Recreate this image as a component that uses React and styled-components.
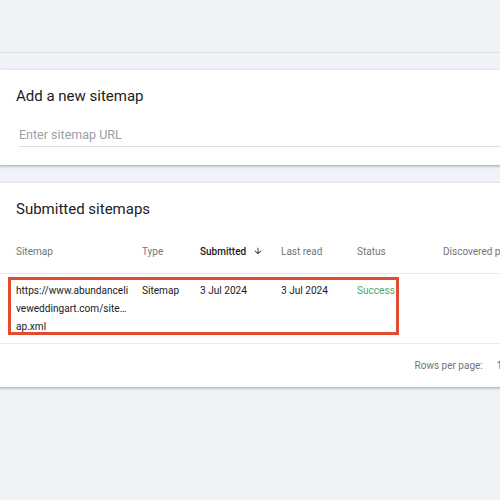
import React from "react";
import styled, { createGlobalStyle } from "styled-components";

const GlobalStyle = createGlobalStyle`
  html, body {
    margin: 0;
    padding: 0;
    background: #eff2f7;
    font-family: Roboto, "Liberation Sans", Arial, sans-serif;
    overflow: hidden;
  }
  * { box-sizing: border-box; }
`;

const Page = styled.div`
  width: 500px;
  height: 500px;
  background: #eff2f7;
  overflow: hidden;
`;

const TopBar = styled.div`
  height: 53px;
  border-bottom: 1px solid #dde1e7;
`;

const Stack = styled.div`
  display: flex;
  flex-direction: column;
  gap: 18px;
  padding-top: 17px;
`;

const Card = styled.section`
  width: 520px;
  background: #fff;
  box-shadow: 0 1px 2px rgba(60, 64, 67, 0.3), 0 1px 3px 1px rgba(60, 64, 67, 0.12);
`;

const Title = styled.h2`
  margin: 0;
  padding: 16px 16px 0;
  font-size: 15px;
  font-weight: 400;
  color: #202124;
  line-height: 20px;
`;

const FieldWrap = styled.div`
  padding-bottom: 18px;
`;

const Field = styled.div`
  margin: 21px 0 0 19px;
  padding-bottom: 3px;
  border-bottom: 1px solid #dadce0;
  font-size: 12.5px;
  color: #9aa0a6;
  line-height: 16px;
`;

const Row = styled.div`
  position: relative;
  display: grid;
  grid-template-columns: 126px 58px 81px 76px 86px 1fr;
  padding-left: 16px;
  border-bottom: 1px solid #e8eaed;
`;

const HeadRow = styled(Row)`
  height: 45px;
  align-items: center;
  margin-top: 10px;
`;

const HeadCell = styled.div`
  font-size: 10px;
  color: ${p => (p.$active ? "#202124" : "#70757a")};
  font-weight: ${p => (p.$active ? 500 : 400)};
  white-space: nowrap;
  display: flex;
  align-items: center;
  gap: 7px;
`;

const BodyRow = styled(Row)`
  padding-top: 8px;
  padding-bottom: 7px;
`;

const Cell = styled.div`
  font-size: 10.1px;
  line-height: 18px;
  color: ${p => (p.$success ? "#4ea862" : "#202124")};
  white-space: nowrap;
`;

const Line = styled.span`
  display: block;
`;

const Highlight = styled.div`
  position: absolute;
  left: 8px;
  top: 3px;
  width: 391px;
  height: 58px;
  border: 3px solid #e34a2f;
  pointer-events: none;
`;

const Footer = styled.div`
  display: flex;
  justify-content: flex-end;
  align-items: center;
  gap: 14px;
  height: 43px;
  padding-right: 12px;
  font-size: 10px;
  color: #70757a;
`;

const PageSize = styled.span`
  color: #5f6368;
`;

const Arrow = () => (
  <svg width="10" height="10" viewBox="0 0 24 24" fill="#202124">
    <path d="M20 12l-1.41-1.41L13 16.17V4h-2v12.17l-5.58-5.59L4 12l8 8 8-8z" />
  </svg>
);

const columns = ["Sitemap", "Type", "Submitted", "Last read", "Status", "Discovered pages"];

export default function App() {
  return (
    <Page>
      <GlobalStyle />
      <TopBar />
      <Stack>
        <Card>
          <Title>Add a new sitemap</Title>
          <FieldWrap>
            <Field>Enter sitemap URL</Field>
          </FieldWrap>
        </Card>
        <Card>
          <Title>Submitted sitemaps</Title>
          <HeadRow>
            {columns.map(c => (
              <HeadCell key={c} $active={c === "Submitted"}>
                {c}
                {c === "Submitted" && <Arrow />}
              </HeadCell>
            ))}
          </HeadRow>
          <BodyRow>
            <Cell>
              <Line>https://www.abundanceli</Line>
              <Line>veweddingart.com/site…</Line>
              <Line>ap.xml</Line>
            </Cell>
            <Cell>Sitemap</Cell>
            <Cell>3 Jul 2024</Cell>
            <Cell>3 Jul 2024</Cell>
            <Cell $success>Success</Cell>
            <Cell />
            <Highlight />
          </BodyRow>
          <Footer>
            Rows per page:
            <PageSize>10</PageSize>
          </Footer>
        </Card>
      </Stack>
    </Page>
  );
}
